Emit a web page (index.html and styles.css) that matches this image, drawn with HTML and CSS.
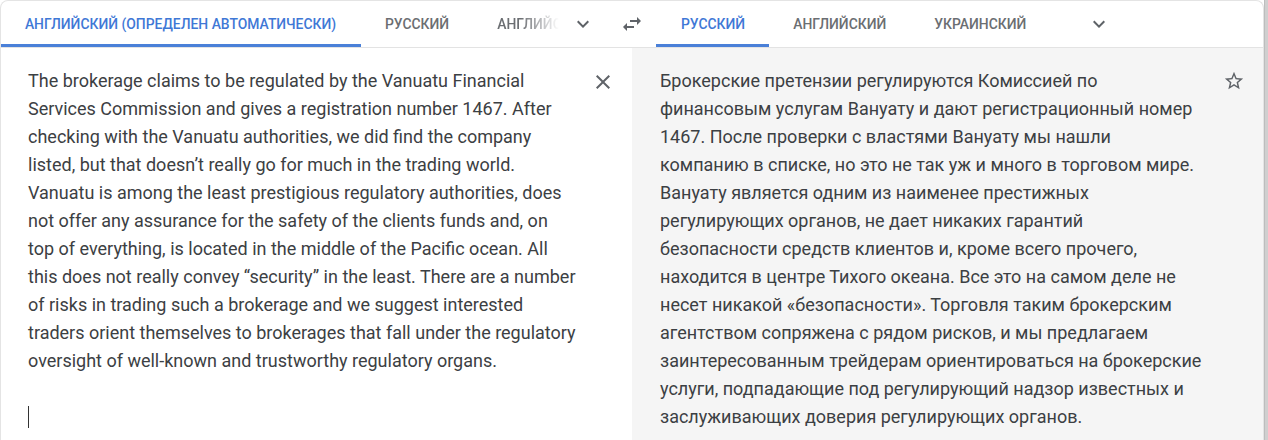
FILE: index.html
```html
<!DOCTYPE html>
<html lang="ru">
<head>
<meta charset="utf-8">
<title>Translate</title>
<link rel="stylesheet" href="styles.css">
</head>
<body>
<div class="page">
  <div class="card">
    <div class="tabbar">
      <div class="side side-left">
        <div class="tab active">Английский (определен автоматически)</div>
        <div class="tab">Русский</div>
        <div class="tab tab-fade">Английский</div>
        <button class="icon-btn chevron"><svg viewBox="0 0 24 24" width="24" height="24"><path d="M7.41 8.59 12 13.17l4.59-4.58L18 10l-6 6-6-6z" fill="#5f6368"/></svg></button>
      </div>
      <button class="icon-btn swap"><svg viewBox="0 0 24 24" width="24" height="24"><path d="M6.99 11 3 15l3.990 4v-3H14v-2H6.99v-3zM21 9l-3.99-4v3H10v2h7.01v3L21 9z" fill="#5f6368"/></svg></button>
      <div class="side side-right">
        <div class="tab active">Русский</div>
        <div class="tab">Английский</div>
        <div class="tab">Украинский</div>
        <button class="icon-btn chevron chevron-right"><svg viewBox="0 0 24 24" width="24" height="24"><path d="M7.41 8.59 12 13.17l4.59-4.58L18 10l-6 6-6-6z" fill="#5f6368"/></svg></button>
      </div>
    </div>
    <div class="panels">
      <div class="panel source">
        <div class="text">The brokerage claims to be regulated by the Vanuatu Financial Services Commission and gives a registration number 1467. After checking with the Vanuatu authorities, we did find the company listed, but that doesn’t really go for much in the trading world. Vanuatu is among the least prestigious regulatory authorities, does not offer any assurance for the safety of the clients funds and, on top of everything, is located in the middle of the Pacific ocean. All this does not really convey “security” in the least. There are a number of risks in trading such a brokerage and we suggest interested traders orient themselves to brokerages that fall under the regulatory oversight of well-known and trustworthy regulatory organs.<br><br><span class="caret"></span></div>
        <button class="icon-btn close"><svg viewBox="0 0 24 24" width="24" height="24"><path d="M19 6.41 17.59 5 12 10.59 6.41 5 5 6.41 10.59 12 5 17.59 6.41 19 12 13.41 17.59 19 19 17.59 13.41 12z" fill="#5f6368"/></svg></button>
      </div>
      <div class="panel target">
        <div class="text">Брокерские претензии регулируются Комиссией по финансовым услугам Вануату и дают регистрационный номер 1467. После проверки с властями Вануату мы нашли компанию в списке, но это не так уж и много в торговом мире. Вануату является одним из наименее престижных регулирующих органов, не дает никаких гарантий безопасности средств клиентов и, кроме всего прочего, находится в центре Тихого океана. Все это на самом деле не несет никакой «безопасности». Торговля таким брокерским агентством сопряжена с рядом рисков, и мы предлагаем заинтересованным трейдерам ориентироваться на брокерские услуги, подпадающие под регулирующий надзор известных и заслуживающих доверия регулирующих органов.</div>
        <button class="icon-btn star"><svg viewBox="0 0 24 24" width="24" height="24"><path d="m22 9.24-7.19-.62L12 2 9.19 8.63 2 9.24l5.46 4.73L5.82 21 12 17.27 18.18 21l-1.630-7.03L22 9.24zM12 15.4l-3.76 2.27 1-4.28-3.32-2.88 4.38-.38L12 6.1l1.710 4.04 4.38.38-3.32 2.88 1 4.28L12 15.4z" fill="#5f6368"/></svg></button>
      </div>
    </div>
  </div>
  <div class="edge"></div>
</div>
</body>
</html>
```

FILE: styles.css
```css
* { box-sizing: border-box; }
html, body { margin: 0; padding: 0; background: #ffffff; }
body { font-family: Roboto, "Noto Sans", Arial, sans-serif; overflow: hidden; }

.page {
  display: flex;
  width: 1268px;
  height: 440px;
}

.card {
  width: 1264px;
  height: 440px;
  border: 1px solid #e4e4e4;
  border-bottom: none;
  border-radius: 8px 8px 0 0;
  overflow: hidden;
  display: flex;
  flex-direction: column;
  background: #fff;
}

.edge {
  width: 4px;
  background: #cfcfcf;
  border-left: 1px solid #bdbdbd;
}

.tabbar {
  height: 47px;
  flex: none;
  display: flex;
  align-items: stretch;
  border-bottom: 1px solid #e3e3e3;
}

.side { display: flex; align-items: stretch; }
.side-left { width: 608px; margin-left: -1px; }
.side-right { flex: 1; }

.tab {
  padding: 0 24px;
  display: flex;
  align-items: center;
  font-size: 13.9px;
  font-weight: 500;
  text-transform: uppercase;
  color: #6b6e72;
  white-space: nowrap;
  border-bottom: 3px solid transparent;
  padding-top: 3px;
}

.tab.active {
  color: #3f78d6;
  border-bottom-color: #4a80d8;
}

.side-left .tab.active { width: 361px; justify-content: center; padding: 3px 0 0; }

.tab-fade {
  width: 62px;
  overflow: hidden;
  -webkit-mask-image: linear-gradient(to right, #000 55%, transparent 100%);
  mask-image: linear-gradient(to right, #000 55%, transparent 100%);
  padding-right: 0;
  box-sizing: content-box;
}

.icon-btn {
  border: none;
  background: none;
  padding: 0;
  width: 40px;
  display: flex;
  align-items: center;
  justify-content: center;
  cursor: pointer;
}

.chevron { width: 48px; }
.chevron-right { margin-left: 25px; }
.swap { width: 48px; }

.side-right .tab:first-child { padding-left: 25px; padding-right: 24px; }

.panels {
  flex: 1;
  display: flex;
}

.panel {
  position: relative;
  display: flex;
}

.source { background: #fff; width: 631px; }
.target { background: #f5f5f5; flex: 1; }

.text {
  font-size: 18px;
  line-height: 28px;
  color: #3c4043;
  padding-top: 19px;
}

.source .text {
  padding-left: 27px;
  width: 576px;
}

.target .text {
  padding-left: 28px;
  width: 570px;
}

.caret {
  display: inline-block;
  width: 1px;
  height: 22px;
  background: #333;
  vertical-align: -5px;
}

.close {
  position: absolute;
  left: 590px;
  top: 22px;
  width: 24px;
  height: 24px;
}

.star {
  position: absolute;
  right: 17px;
  top: 21px;
  width: 24px;
  height: 24px;
}
.star svg { width: 22px; height: 22px; }
```
